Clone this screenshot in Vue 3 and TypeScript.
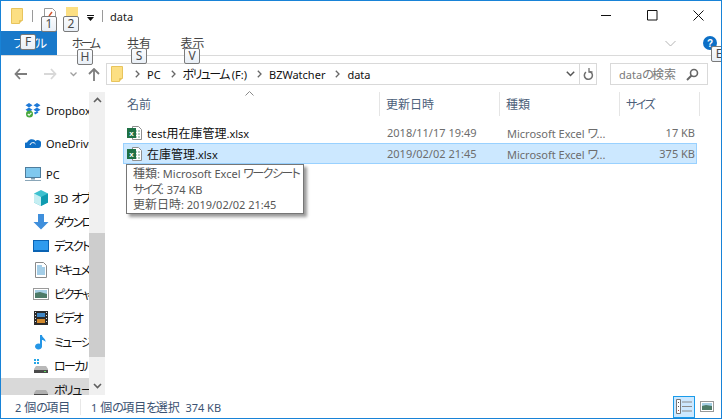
<script setup lang="ts">
import { h } from 'vue'

// Kana in the reference's UI font is narrow and Latin is compact, so each script gets its own metrics.
const T = (props: { text: string }) =>
  h(
    'span',
    { class: 't-wrap' },
    (props.text.match(/[\u3040-\u30ff]+|[\u4e00-\u9fff]+|[^\u3040-\u30ff\u4e00-\u9fff]+/g) ?? []).map((s) =>
      h('span', { class: /[\u3040-\u30ff]/.test(s) ? 't-kana' : /[\u4e00-\u9fff]/.test(s) ? 't-kanji' : 't-latin' }, s),
    ),
  )
T.props = ['text']

const navItems = [
  { key: 'dropbox', label: 'Dropbox', level: 1, gap: 0 },
  { key: 'onedrive', label: 'OneDrive', level: 1, gap: 9 },
  { key: 'pc', label: 'PC', level: 1, gap: 7 },
  { key: 'cube', label: '3D オブジェクト', level: 2, gap: 0 },
  { key: 'down', label: 'ダウンロード', level: 2, gap: 0 },
  { key: 'desk', label: 'デスクトップ', level: 2, gap: 0 },
  { key: 'doc', label: 'ドキュメント', level: 2, gap: 0 },
  { key: 'pic', label: 'ピクチャ', level: 2, gap: 0 },
  { key: 'video', label: 'ビデオ', level: 2, gap: 0 },
  { key: 'music', label: 'ミュージック', level: 2, gap: 0 },
  { key: 'local', label: 'ローカル ディスク', level: 2, gap: 0 },
  { key: 'vol', label: 'ボリューム (F:)', level: 2, gap: 0, selected: true },
]
const crumbs = ['PC', 'ボリューム (F:)', 'BZWatcher', 'data']
const columns = ['名前', '更新日時', '種類', 'サイズ']
const files = [
  { name: 'test用在庫管理.xlsx', date: '2018/11/17 19:49', type: 'Microsoft Excel ワ...', size: '17 KB', selected: false },
  { name: '在庫管理.xlsx', date: '2019/02/02 21:45', type: 'Microsoft Excel ワ...', size: '375 KB', selected: true },
]
const tips = [
  { t: '1', c: 'k1' }, { t: '2', c: 'k2' }, { t: 'F', c: 'kf' },
  { t: 'H', c: 'kh' }, { t: 'S', c: 'ks' }, { t: 'V', c: 'kv' },
]
</script>

<template>
  <div class="window">
    <header class="titlebar">
      <svg class="folder" width="12" height="16" viewBox="0 0 12 16"><path d="M.5.5h11v12h-3v3h-8z" fill="#fcdf83" stroke="#e8c45c"/><path d="M8.5 15.500v-3h3z" fill="#e8c45c"/></svg>
      <i class="tsep sep-a"></i>
      <svg class="qdoc" width="12" height="14" viewBox="0 0 12 14"><path d="M.5.5h8l3 3v10H.5z" fill="#fff" stroke="#9a9a9a"/><path d="M5 8l3-4" stroke="#d4552f" stroke-width="1.4"/></svg>
      <svg class="qfolder" width="12" height="12" viewBox="0 0 12 12"><path d="M0 0h12v12H0z" fill="#fcdf83"/></svg>
      <svg class="qdrop" width="8" height="6" viewBox="0 0 8 6"><path d="M0 0h7v1H0zM0 2h7L3.500 6z" fill="#111"/></svg>
      <i class="tsep sep-b"></i>
      <span class="title"><T text="data" /></span>
      <div class="winbtns">
        <svg width="11" height="11" viewBox="0 0 11 11"><path d="M0 5.500h10" stroke="#111"/></svg>
        <svg width="11" height="11" viewBox="0 0 11 11"><path d="M.5.500h9.500v9.500H.5z" fill="none" stroke="#111"/></svg>
        <svg width="11" height="11" viewBox="0 0 11 11"><path d="M.5.500l10 10M10.500.500l-10 10" stroke="#111" fill="none"/></svg>
      </div>
    </header>

    <nav class="ribbon">
      <span class="tab file"><T text="ファイル" /></span>
      <span class="tab home"><T text="ホーム" /></span>
      <span class="tab share"><T text="共有" /></span>
      <span class="tab view"><T text="表示" /></span>
      <svg class="collapse" width="11" height="7" viewBox="0 0 11 7"><path d="M.5 1l5 5 5-5" fill="none" stroke="#b4b4b4"/></svg>
      <svg class="help" width="14" height="14" viewBox="0 0 14 14"><circle cx="7" cy="7" r="7" fill="#0d6fc6"/><text x="7" y="10.500" font-size="10" font-weight="700" text-anchor="middle" fill="#fff" font-family="Liberation Sans">?</text></svg>
    </nav>

    <section class="toolbar">
      <svg class="back" width="13" height="12" viewBox="0 0 13 12"><path d="M6 1L1.500 6 6 11M2 6h11" fill="none" stroke="#7d7d7d" stroke-width="1.800"/></svg>
      <svg class="forward" width="13" height="12" viewBox="0 0 13 12"><path d="M7 1l4.500 5L7 11M0 6h11" fill="none" stroke="#d8d8d8" stroke-width="1.800"/></svg>
      <svg class="recent" width="7" height="5" viewBox="0 0 7 5"><path d="M.5.500l3 3 3-3" fill="none" stroke="#a0a0a0" stroke-width="1.300"/></svg>
      <svg class="up" width="12" height="13" viewBox="0 0 12 13"><path d="M1 6l5-5 5 5M6 2v11" fill="none" stroke="#7d7d7d" stroke-width="1.800"/></svg>
      <div class="address">
        <svg class="addr-folder" width="12" height="16" viewBox="0 0 12 16"><path d="M.5.500h11v12h-3v3h-8z" fill="#fcdf83" stroke="#e8c45c"/><path d="M8.500 15.500v-3h3z" fill="#e8c45c"/></svg>
        <template v-for="c in crumbs" :key="c">
          <svg class="chev" width="5" height="8" viewBox="0 0 5 8"><path d="M.8.800L4 4 .8 7.200" fill="none" stroke="#666" stroke-width="1.300"/></svg>
          <span class="crumb"><T :text="c" /></span>
        </template>
        <svg class="addr-drop" width="9" height="6" viewBox="0 0 9 6"><path d="M.8.800l3.700 3.700L8.200.800" fill="none" stroke="#555" stroke-width="1.500"/></svg>
        <div class="refresh">
          <svg width="11" height="12" viewBox="0 0 11 12"><path d="M6.500 2.500a4 4 0 1 1-3.500.6" fill="none" stroke="#707070" stroke-width="1.500" transform="translate(0 1)"/><path d="M3 0v4.500h3.500" fill="none" stroke="#707070" stroke-width="1.300" transform="translate(3 -.5)"/></svg>
        </div>
      </div>
      <div class="search">
        <span><T text="dataの検索" /></span>
        <svg width="13" height="13" viewBox="0 0 13 13"><circle cx="8" cy="5" r="3.500" fill="none" stroke="#666" stroke-width="1.600"/><path d="M5.500 7.500L1 12" stroke="#666" stroke-width="2"/></svg>
      </div>
    </section>

    <div class="body">
      <aside class="sidebar">
        <ul class="navlist">
          <li
            v-for="item in navItems"
            :key="item.key"
            class="navitem"
            :class="['lvl' + item.level, { sel: item.selected, ['gap' + item.gap]: true }]"
          >
            <svg class="navicon" width="16" height="16" viewBox="0 0 16 16">
              <g v-if="item.key === 'dropbox'">
                <path d="M4 1l3.500 2.200L4 5.500.5 3.200zM12 1l3.500 2.200L12 5.500 8.500 3.200zM4 5.500l3.500 2.300L4 10 .5 7.800zM12 5.500l3.500 2.300L12 10 8.500 7.800z" fill="#1d79d8"/>
                <path d="M9 10.500l3-1 1.500 1-3.500 2z" fill="#1d79d8"/>
                <circle cx="4.500" cy="12" r="3.500" fill="#49a83e"/><path d="M2.800 12l1.300 1.300 2.300-2.500" fill="none" stroke="#fff" stroke-width="1.100"/>
              </g>
              <g v-else-if="item.key === 'onedrive'">
                <path d="M0 13a3 3 0 0 1 2-5.500A5 5 0 0 1 10.500 6a3.500 3.500 0 0 1 5.500 4c0 2-1 3-2.500 3z" fill="#0f6fc6"/>
                <path d="M5 10a3 3 0 0 1 5.500-1" fill="none" stroke="#fff" stroke-width="1"/>
              </g>
              <g v-else-if="item.key === 'pc'">
                <rect x=".5" y="1.500" width="15" height="10" fill="#7fc8ee" stroke="#4e7d9d"/>
                <path d="M6 12h4v1.500H6z" fill="#7f9fb2"/><path d="M0 14h16v1H0z" fill="#8aa6b8"/>
              </g>
              <g v-else-if="item.key === 'cube'">
                <path d="M8 0l7 3.500v9L8 16l-7-3.500v-9z" fill="#3ec1cf"/>
                <path d="M1 3.500L8 7v9l-7-3.500z" fill="#c5eef2"/><path d="M15 3.500L8 7v9l7-3.500z" fill="#0f9bb0"/>
              </g>
              <g v-else-if="item.key === 'down'">
                <path d="M5 0h6v8h4.500L8 15.500.5 8H5z" fill="#3f8fdc"/>
              </g>
              <g v-else-if="item.key === 'desk'">
                <rect x=".5" y="2.500" width="15" height="11" fill="#2f9bee" stroke="#0a63b3"/>
                <path d="M1 12h14v1H1z" fill="#0a63b3"/>
              </g>
              <g v-else-if="item.key === 'doc'">
                <path d="M2.500.500h8l3 3v12h-11z" fill="#fff" stroke="#8a8a8a"/>
                <path d="M4 4h5M4 6h8M4 8h8M4 10h8M4 12h8" stroke="#4a9dd0"/>
              </g>
              <g v-else-if="item.key === 'pic'">
                <rect x=".5" y="2.500" width="15" height="11" fill="#fff" stroke="#9a9a9a"/>
                <path d="M2 4h12v4H2z" fill="#a6cfe4"/><path d="M2 7l5-1 7 2v4H2z" fill="#4c7a67"/>
              </g>
              <g v-else-if="item.key === 'video'">
                <rect x="1" y="1" width="14" height="14" fill="#2b2b2b"/>
                <path d="M4 3h8v4H4z" fill="#3f86c4"/><path d="M4 9h8v4H4z" fill="#d2892c"/>
                <path d="M2 2h1v1H2zM2 5h1v1H2zM2 8h1v1H2zM2 11h1v1H2zM13 2h1v1h-1zM13 5h1v1h-1zM13 8h1v1h-1zM13 11h1v1h-1z" fill="#ddd"/>
              </g>
              <g v-else-if="item.key === 'music'">
                <path d="M7 1h2c0 3 4 3.500 3.500 7C11.500 6.500 10 6 9 6v6.500a3.500 3 0 1 1-2-2.700z" fill="#2596e6"/>
              </g>
              <g v-else-if="item.key === 'local'">
                <path d="M1 1h2v2H1zM4 1h2v2H4zM1 4h2v2H1zM4 4h2v2H4z" fill="#26a6e6"/>
                <path d="M3 8h10l2 3v4H1v-4z" fill="#b9b9b9"/><path d="M1 12h14v3H1z" fill="#4a4a4a"/><path d="M11 13h2v1h-2z" fill="#5fd85f"/>
              </g>
              <g v-else>
                <path d="M3 8h10l2 3v4H1v-4z" fill="#b0b0b0"/><path d="M1 12h14v3H1z" fill="#4a4a4a"/>
              </g>
            </svg>
            <span class="navlabel"><T :text="item.label" /></span>
          </li>
        </ul>
        <div class="scrollbar">
          <svg class="sarrow" width="9" height="6" viewBox="0 0 9 6"><path d="M1 5l3.500-3.500L8 5" fill="none" stroke="#606060" stroke-width="1.600"/></svg>
          <div class="thumb"></div>
          <svg class="sarrow down" width="9" height="6" viewBox="0 0 9 6"><path d="M1 1l3.500 3.500L8 1" fill="none" stroke="#606060" stroke-width="1.600"/></svg>
        </div>
      </aside>

      <main class="content">
        <div class="columns">
          <span v-for="c in columns" :key="c" class="colhead"><T :text="c" /></span>
          <svg class="sort" width="9" height="5" viewBox="0 0 9 5"><path d="M.5 4.500l4-4 4 4" fill="none" stroke="#8a8a8a"/></svg>
        </div>
        <div class="rows">
          <div v-for="f in files" :key="f.name" class="row" :class="{ selected: f.selected }">
            <span class="cell name">
              <svg width="16" height="16" viewBox="0 0 16 16">
                <path d="M5.500 1.500h6l3 3v10h-9z" fill="#fff" stroke="#8f8f8f"/>
                <path d="M8 5h2v2H8zM11 5h2v2h-2zM8 8h2v2H8zM11 8h2v2h-2zM8 11h2v2H8zM11 11h2v2h-2z" fill="#b5cfc0"/>
                <rect x="0" y="3" width="9" height="10" fill="#1e7145"/>
                <text x="4.500" y="11" font-size="8" font-weight="700" text-anchor="middle" fill="#fff" font-family="Liberation Sans">x</text>
              </svg>
              <span><T :text="f.name" /></span>
            </span>
            <span class="cell meta"><T :text="f.date" /></span>
            <span class="cell meta"><T :text="f.type" /></span>
            <span class="cell meta size"><T :text="f.size" /></span>
          </div>
        </div>
        <div class="tooltip">
          <div><T text="種類: Microsoft Excel ワークシート" /></div>
          <div><T text="サイズ: 374 KB" /></div>
          <div><T text="更新日時: 2019/02/02 21:45" /></div>
        </div>
      </main>
    </div>

    <footer class="status">
      <span class="count"><T text="2 個の項目" /></span>
      <i class="ssep"></i>
      <span><T text="1 個の項目を選択  374 KB" /></span>
      <div class="views">
        <span class="viewbtn on">
          <svg width="16" height="15" viewBox="0 0 16 15"><path d="M.5.500h4v14h-4z" fill="#fff" stroke="#777"/><path d="M2 3h1v1H2zM2 7h1v1H2z" fill="#555"/><path d="M2 11h1v1H2z" fill="#b04a3a"/><path d="M6 3h10M6 7.500h10M6 12h10" stroke="#8a8a8a"/></svg>
        </span>
        <span class="viewbtn">
          <svg width="14" height="11" viewBox="0 0 14 11"><rect x=".5" y=".5" width="13" height="10" fill="#fff" stroke="#999"/><path d="M2 2h10v3H2z" fill="#a6cfe4"/><path d="M2 5l4-1 6 1v4H2z" fill="#4c7a67"/></svg>
        </span>
      </div>
    </footer>

    <span v-for="k in tips" :key="k.t" class="keytip" :class="k.c">{{ k.t }}</span>
    <span class="keytip ke">E</span>
  </div>
</template>

<style>
html, body { margin: 0; background: #fff; overflow: hidden; }
.t-wrap { white-space: pre; }
.t-latin { font-size: 11px; }
.t-kanji { font-size: 12px; }
.t-kana { font-size: 12px; font-feature-settings: "palt"; letter-spacing: -1.6px; }
</style>

<style scoped>
.window {
  position: relative;
  box-sizing: border-box;
  width: 722px;
  height: 419px;
  border: 1px solid #1883d7;
  background: #fff;
  display: flex;
  flex-direction: column;
  overflow: hidden;
  font-family: "Noto Sans", "Noto Sans CJK JP", sans-serif;
  font-size: 12px;
  color: #1a1a1a;
}
.titlebar { height: 30px; flex: none; display: flex; align-items: center; padding-left: 10px; }
.folder { margin-top: -1px; }
.tsep { width: 1px; height: 12px; background: #9a9a9a; }
.sep-a { margin-left: 9px; }
.qdoc { margin-left: 11px; margin-top: -2px; }
.qfolder { margin-left: 10px; margin-top: -6px; }
.qdrop { margin-left: 9px; margin-top: 3px; }
.sep-b { margin-left: 7px; }
.title { margin-left: 7px; }
.winbtns { margin-left: auto; display: flex; gap: 35px; padding-right: 17px; margin-top: -1px; }

.ribbon { height: 24px; flex: none; display: flex; align-items: center; border-bottom: 1px solid #dadada; box-sizing: content-box; position: relative; }
.tab { color: #444; display: flex; align-items: center; justify-content: center; height: 24px; }
.tab :deep(.t-kana) { letter-spacing: -2.6px; }
.file { width: 56px; background: #1979ca; color: #fff; }
.home { width: 56px; }
.share { width: 52px; }
.view { width: 55px; }
.collapse { margin-left: auto; margin-right: 27px; }
.help { margin-right: 4px; }

.toolbar { height: 36px; flex: none; display: flex; align-items: center; }
.back { margin-left: 13px; }
.forward { margin-left: 17px; }
.recent { margin-left: 13px; }
.up { margin-left: 11px; }
.address {
  margin-left: 6px; width: 491px; height: 22px; box-sizing: border-box;
  border: 1px solid #d9d9d9; display: flex; align-items: center;
}
.addr-folder { margin-left: 4px; margin-right: 12px; }
.chev { margin-right: 7px; }
.crumb { margin-right: 10px; color: #111; white-space: nowrap; }
.addr-drop { margin-left: auto; margin-right: 4px; }
.refresh { width: 16px; height: 20px; border-left: 1px solid #d9d9d9; display: flex; align-items: center; justify-content: center; }
.search {
  margin-left: 13px; width: 98px; height: 22px; box-sizing: border-box; border: 1px solid #d9d9d9;
  display: flex; align-items: center; justify-content: space-between; padding: 0 8px; color: #7a7a7a;
}

.body { flex: 1; min-height: 0; display: flex; }
.sidebar { width: 104px; flex: none; display: flex; min-height: 0; }
.navlist { list-style: none; margin: 0; padding: 6px 0 0; width: 88px; overflow: hidden; flex: none; }
.navitem { height: 24px; display: flex; align-items: center; white-space: nowrap; overflow: hidden; }
.gap9 { margin-top: 9px; }
.gap7 { margin-top: 7px; }
.lvl1 { padding-left: 24px; }
.lvl2 { padding-left: 32px; }
.navlabel { margin-left: 5px; color: #111; }
.sel { background: #d9d9d9; }
.navicon { flex: none; }
.scrollbar { width: 16px; flex: none; background: #f0f0f0; display: flex; flex-direction: column; align-items: center; }
.sarrow { margin-top: 5px; flex: none; }
.sarrow.down { margin-top: 26px; }
.thumb { width: 100%; height: 124px; margin-top: 130px; background: #cdcdcd; flex: none; }

.content { flex: 1; position: relative; min-width: 0; }
.columns { display: grid; grid-template-columns: 275px 120px 120px 80px; height: 24px; position: relative; }
.colhead { border-right: 1px solid #e5e5e5; display: flex; align-items: center; padding-left: 6px; color: #4c607a; }
.colhead:first-child { padding-left: 22px; }
.sort { position: absolute; left: 140px; top: -1px; }
.rows { margin: 6px 0 0 18px; width: 574px; }
.row { display: grid; grid-template-columns: 257px 120px 120px 77px; height: 21px; box-sizing: border-box; align-items: center; border: 1px solid transparent; }
.row.selected { background: #cce8ff; border-color: #99d1ff; }
.cell { white-space: nowrap; overflow: hidden; }
.name { display: flex; align-items: center; gap: 4px; padding-left: 3px; color: #111; }
.meta { color: #6d6d6d; padding-left: 6px; }
.size { text-align: right; padding-right: 3px; }

.tooltip {
  position: absolute; left: 21px; top: 72px; width: 178px; height: 50px; box-sizing: border-box;
  background: #fff; border: 1px solid #767676; box-shadow: 3px 3px 3px rgba(0,0,0,.4);
  padding: 1px 6px 0; color: #575757; line-height: 15.500px; white-space: nowrap;
}

.status { height: 23px; flex: none; display: flex; align-items: center; color: #3b5272; position: relative; }
.count { margin-left: 14px; width: 65px; flex: none; }
.ssep { width: 1px; height: 16px; background: #e8e8e8; margin-right: 10px; flex: none; }
.views { margin-left: auto; margin-right: 4px; display: flex; align-items: center; gap: 1px; }
.viewbtn { width: 21px; height: 22px; box-sizing: border-box; display: flex; align-items: center; justify-content: center; border: 1px solid transparent; }
.viewbtn.on { width: 22px; background: #cce8ff; border-color: #1a9bea; }

.keytip {
  position: absolute; width: 16px; height: 16px; box-sizing: border-box; border: 1px solid #7a7a7a; border-radius: 2px;
  background: linear-gradient(#fbfcfe, #e9eff6); color: #4a4a4a; font-size: 12px; line-height: 14px; text-align: center;
}
.k1 { left: 40px; top: 15px; }
.k2 { left: 62px; top: 15px; }
.kf { left: 19px; top: 33px; }
.kh { left: 76px; top: 48px; }
.ks { left: 130px; top: 47px; }
.kv { left: 183px; top: 47px; }
.ke { left: 710px; top: 45px; width: 16px; }
</style>
